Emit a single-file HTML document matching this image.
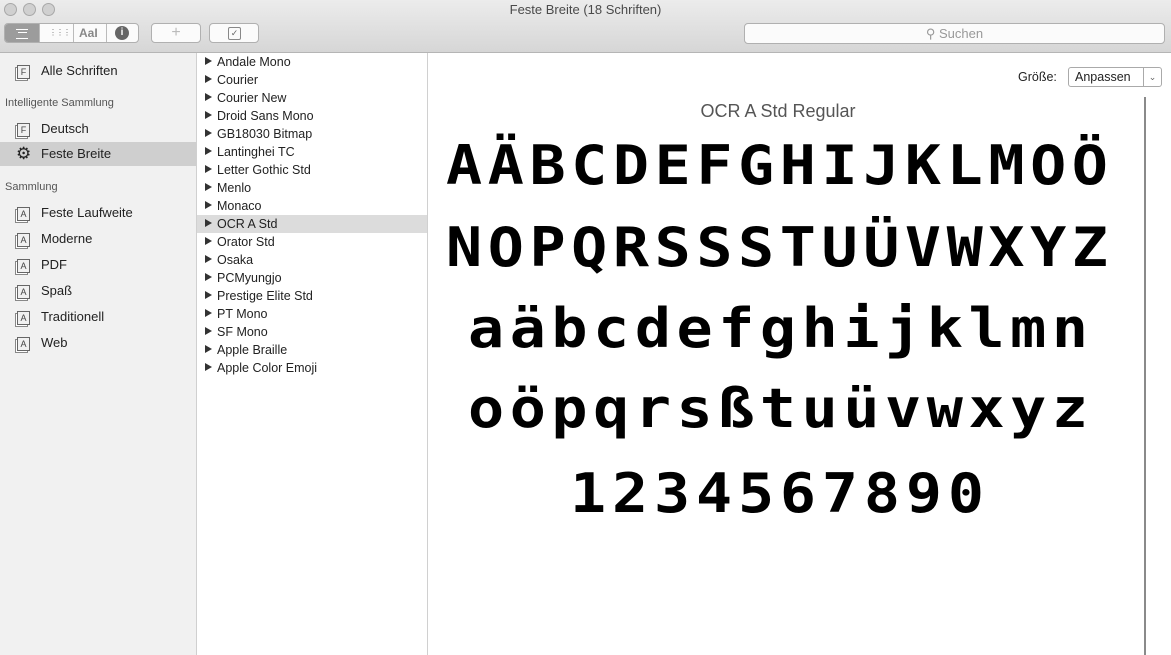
<!DOCTYPE html><html><head><meta charset="utf-8"><style>
body{margin:0;width:1171px;height:655px;overflow:hidden;font-family:"Liberation Sans",sans-serif;font-size:12.5px;color:#222;background:#fff;position:relative}
.tb{position:absolute;left:0;top:0;width:1171px;height:52px;background:linear-gradient(#ececec,#d6d6d6);border-bottom:1px solid #b5b5b5}
.dot{position:absolute;top:3px;width:11px;height:11px;border-radius:50%;background:#d0d0d0;border:1px solid #a8a8a8}
.title{position:absolute;top:2px;left:0;width:1171px;text-align:center;font-size:13px;color:#4a4a4a}
.seg{position:absolute;top:23px;height:20px;border:1px solid #b0b0b0;border-radius:4px;background:#fbfbfb;box-sizing:border-box}
.side{position:absolute;left:0;top:53px;width:196px;height:602px;background:#f1f1f1;border-right:1px solid #d0d0d0}
.si{position:absolute;left:0;width:196px;height:24px;line-height:24px;font-size:13px}
.si .ic{position:absolute;left:17px;top:6px;width:11px;height:12px;border:1px solid #666;font-size:9px;line-height:12px;text-align:center;color:#444;box-shadow:-2px 2px 0 -1px #fff,-2px 2px 0 0 #888}
.si span.t{position:absolute;left:41px}
.hd{position:absolute;left:5px;font-size:11px;color:#555}
.list{position:absolute;left:197px;top:53px;width:230px;height:602px;border-right:1px solid #d0d0d0}
.li{position:absolute;left:0;width:230px;height:18px;line-height:18px;font-size:12.5px}
.li::before{content:"";position:absolute;left:8px;top:4px;border-left:7px solid #333;border-top:4.5px solid transparent;border-bottom:4.5px solid transparent}
.li span{position:absolute;left:20px}
.row{position:absolute;display:flex;justify-content:space-between;font-family:"DejaVu Sans Mono","Liberation Mono",monospace;font-weight:bold;color:#000;line-height:1;transform:scaleY(0.9);transform-origin:0 0}
</style></head><body>
<div class="tb">
<div class="dot" style="left:4px"></div><div class="dot" style="left:23px"></div><div class="dot" style="left:42px"></div>
<div class="title">Feste Breite (18 Schriften)</div>
<div class="seg" style="left:4px;width:135px;overflow:hidden">
<div style="position:absolute;left:0;top:0;width:34px;height:18px;background:#9c9c9c"></div>
<div style="position:absolute;left:11px;top:5px;width:12px;height:8px;border-top:1px solid #fff;border-bottom:1px solid #fff"></div>
<div style="position:absolute;left:13px;top:8px;width:9px;border-top:1px solid #fff"></div>
<div style="position:absolute;left:34px;top:0;width:1px;height:18px;background:#bbb"></div>
<div style="position:absolute;left:44px;top:4px;font-size:8px;color:#777;letter-spacing:-1px">⋮⋮⋮</div>
<div style="position:absolute;left:68px;top:0;width:1px;height:18px;background:#bbb"></div>
<div style="position:absolute;left:74px;top:2px;font-size:12px;color:#888;font-weight:bold">AaI</div>
<div style="position:absolute;left:101px;top:0;width:1px;height:18px;background:#bbb"></div>
<div style="position:absolute;left:110px;top:2px;width:14px;height:14px;border-radius:50%;background:#666;color:#fff;font-size:10px;font-weight:bold;text-align:center;line-height:14px">i</div>
</div>
<div class="seg" style="left:151px;width:50px;text-align:center;color:#bbb;font-size:16px;line-height:17px">+</div>
<div class="seg" style="left:209px;width:50px"><div style="position:absolute;left:18px;top:3px;width:11px;height:11px;border:1px solid #888;border-radius:2px;font-size:9px;line-height:11px;text-align:center;color:#666">✓</div></div>
<div class="seg" style="left:744px;width:421px;height:21px;color:#999;font-size:13px;line-height:19px;text-align:center">&#9906; Suchen</div>
</div>
<div class="side">
<div class="si" style="top:6px"><div class="ic">F</div><span class="t">Alle Schriften</span></div>
<div class="hd" style="top:44px">Intelligente Sammlung</div>
<div class="si" style="top:64px"><div class="ic">F</div><span class="t">Deutsch</span></div>
<div class="si" style="top:89px;background:#cfcfcf"><span style="position:absolute;left:16px;font-size:17px">⚙</span><span class="t">Feste Breite</span></div>
<div class="hd" style="top:128px">Sammlung</div>
<div class="si" style="top:148px"><div class="ic">A</div><span class="t">Feste Laufweite</span></div>
<div class="si" style="top:174px"><div class="ic">A</div><span class="t">Moderne</span></div>
<div class="si" style="top:200px"><div class="ic">A</div><span class="t">PDF</span></div>
<div class="si" style="top:226px"><div class="ic">A</div><span class="t">Spaß</span></div>
<div class="si" style="top:252px"><div class="ic">A</div><span class="t">Traditionell</span></div>
<div class="si" style="top:278px"><div class="ic">A</div><span class="t">Web</span></div>
</div>
<div class="list">
<div class="li" style="top:0"><span>Andale Mono</span></div>
<div class="li" style="top:18px"><span>Courier</span></div>
<div class="li" style="top:36px"><span>Courier New</span></div>
<div class="li" style="top:54px"><span>Droid Sans Mono</span></div>
<div class="li" style="top:72px"><span>GB18030 Bitmap</span></div>
<div class="li" style="top:90px"><span>Lantinghei TC</span></div>
<div class="li" style="top:108px"><span>Letter Gothic Std</span></div>
<div class="li" style="top:126px"><span>Menlo</span></div>
<div class="li" style="top:144px"><span>Monaco</span></div>
<div class="li" style="top:162px;background:#dcdcdc"><span>OCR A Std</span></div>
<div class="li" style="top:180px"><span>Orator Std</span></div>
<div class="li" style="top:198px"><span>Osaka</span></div>
<div class="li" style="top:216px"><span>PCMyungjo</span></div>
<div class="li" style="top:234px"><span>Prestige Elite Std</span></div>
<div class="li" style="top:252px"><span>PT Mono</span></div>
<div class="li" style="top:270px"><span>SF Mono</span></div>
<div class="li" style="top:288px"><span>Apple Braille</span></div>
<div class="li" style="top:306px"><span>Apple Color Emoji</span></div>
</div>
<div style="position:absolute;left:1018px;top:70px;font-size:12.5px">Größe:</div>
<div style="position:absolute;left:1068px;top:67px;width:94px;height:20px;border:1px solid #aaa;border-radius:3px;box-sizing:border-box;font-size:12.5px;line-height:18px;padding-left:6px">Anpassen<div style="position:absolute;right:0;top:0;width:17px;height:18px;border-left:1px solid #aaa;text-align:center;font-size:9px;color:#666">⌄</div></div>
<div style="position:absolute;left:1144px;top:97px;width:2px;height:558px;background:#8a8a8a"></div>
<div style="position:absolute;left:428px;top:101px;width:700px;text-align:center;font-size:18px;color:#555">OCR A Std Regular</div>
<div class="row" style="left:446px;width:662px;top:139px;font-size:60px"><span>A</span><span>Ä</span><span>B</span><span>C</span><span>D</span><span>E</span><span>F</span><span>G</span><span>H</span><span>I</span><span>J</span><span>K</span><span>L</span><span>M</span><span>O</span><span>Ö</span></div>
<div class="row" style="left:446px;width:662px;top:221px;font-size:60px"><span>N</span><span>O</span><span>P</span><span>Q</span><span>R</span><span>S</span><span>S</span><span>S</span><span>T</span><span>U</span><span>Ü</span><span>V</span><span>W</span><span>X</span><span>Y</span><span>Z</span></div>
<div class="row" style="left:468px;width:620px;top:302px;font-size:60px"><span>a</span><span>ä</span><span>b</span><span>c</span><span>d</span><span>e</span><span>f</span><span>g</span><span>h</span><span>i</span><span>j</span><span>k</span><span>l</span><span>m</span><span>n</span></div>
<div class="row" style="left:468px;width:620px;top:382px;font-size:60px"><span>o</span><span>ö</span><span>p</span><span>q</span><span>r</span><span>s</span><span>ß</span><span>t</span><span>u</span><span>ü</span><span>v</span><span>w</span><span>x</span><span>y</span><span>z</span></div>
<div class="row" style="left:570px;width:414px;top:467px;font-size:60px"><span>1</span><span>2</span><span>3</span><span>4</span><span>5</span><span>6</span><span>7</span><span>8</span><span>9</span><span>0</span></div>
</body></html>
